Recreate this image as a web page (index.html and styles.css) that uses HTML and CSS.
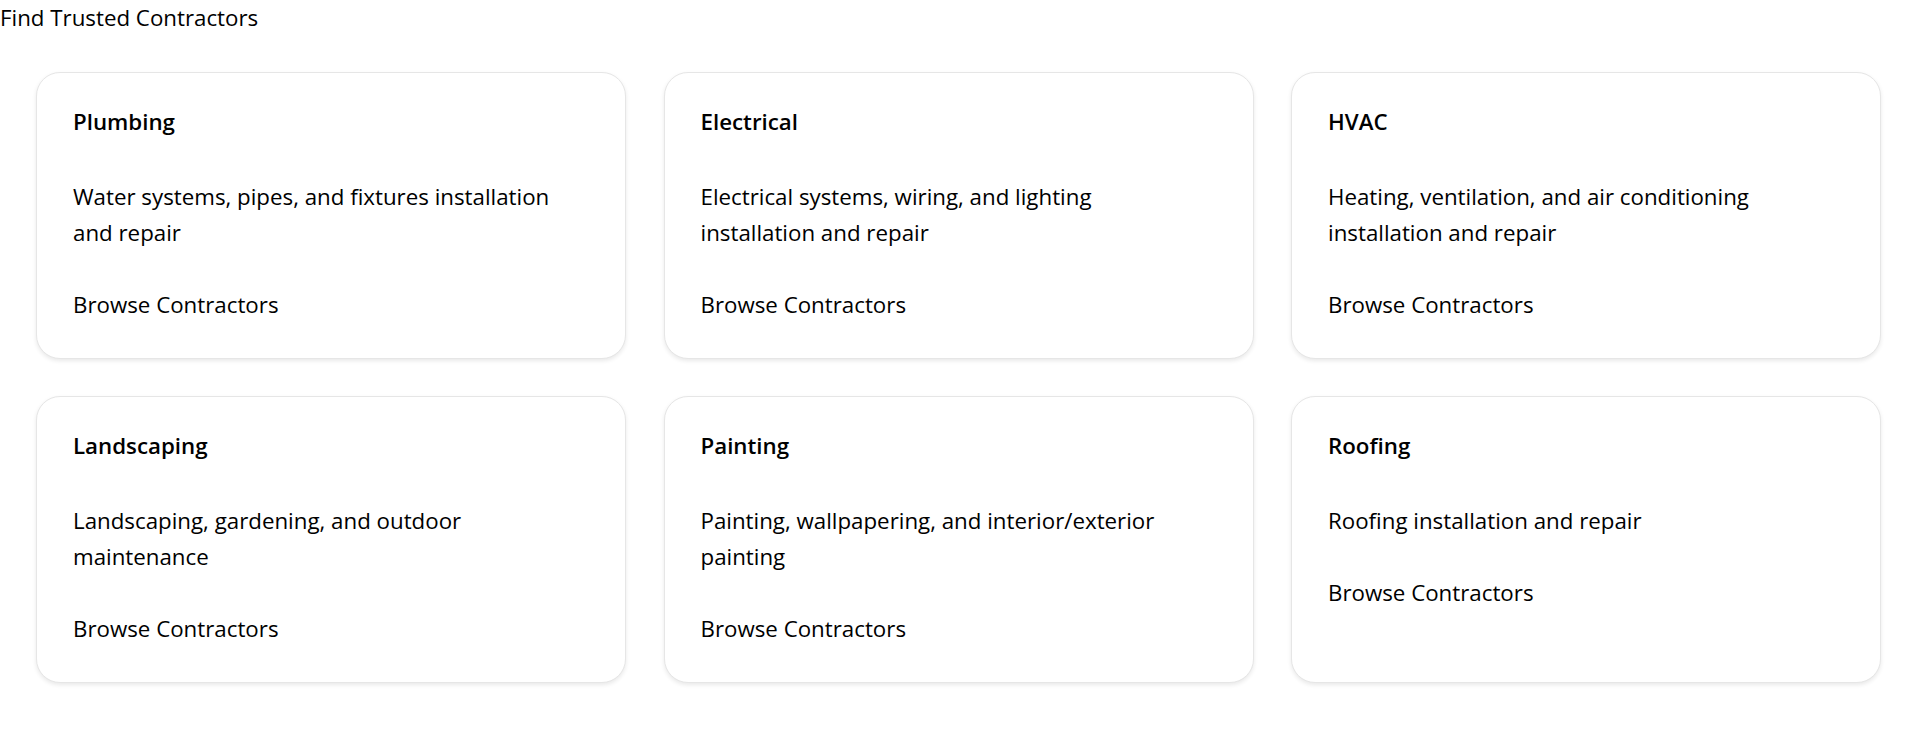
FILE: index.html
```html
<!DOCTYPE html>
<html lang="en">
<head>
<meta charset="utf-8">
<title>Find Trusted Contractors</title>
<link rel="stylesheet" href="styles.css">
</head>
<body>
<div class="page-title">Find Trusted Contractors</div>
<main class="grid">
  <section class="card">
    <h3 class="card-title">Plumbing</h3>
    <p class="card-desc">Water systems, pipes, and fixtures installation and repair</p>
    <a class="card-link">Browse Contractors</a>
  </section>
  <section class="card">
    <h3 class="card-title">Electrical</h3>
    <p class="card-desc">Electrical systems, wiring, and lighting installation and repair</p>
    <a class="card-link">Browse Contractors</a>
  </section>
  <section class="card">
    <h3 class="card-title">HVAC</h3>
    <p class="card-desc">Heating, ventilation, and air conditioning installation and repair</p>
    <a class="card-link">Browse Contractors</a>
  </section>
  <section class="card">
    <h3 class="card-title">Landscaping</h3>
    <p class="card-desc">Landscaping, gardening, and outdoor maintenance</p>
    <a class="card-link">Browse Contractors</a>
  </section>
  <section class="card">
    <h3 class="card-title">Painting</h3>
    <p class="card-desc">Painting, wallpapering, and interior/exterior painting</p>
    <a class="card-link">Browse Contractors</a>
  </section>
  <section class="card">
    <h3 class="card-title">Roofing</h3>
    <p class="card-desc">Roofing installation and repair</p>
    <a class="card-link">Browse Contractors</a>
  </section>
</main>
</body>
</html>
```

FILE: styles.css
```css
html, body {
  margin: 0;
  padding: 0;
  background: #ffffff;
}

body {
  font-family: "Open Sans", "Noto Sans", sans-serif;
  font-size: 22.3px;
  line-height: 36px;
  color: #000000;
}

.page-title {
  height: 36px;
}

.grid {
  display: grid;
  grid-template-columns: repeat(3, 1fr);
  column-gap: 37.5px;
  row-gap: 37px;
  padding: 36px 36px;
}

.card {
  display: flex;
  flex-direction: column;
  align-items: flex-start;
  background: #ffffff;
  border: 1px solid #e6e6e6;
  border-radius: 24px;
  box-shadow: 0 2px 4px rgba(0, 0, 0, 0.09);
  padding: 31px 44px 35px 36px;
}

.card-title {
  margin: 0 0 39px;
  font-size: 22.3px;
  font-weight: 600;
  line-height: 36px;
}

.card-desc {
  margin: 0 0 36px;
}

.card-link {
  color: #000000;
  text-decoration: none;
}
```
